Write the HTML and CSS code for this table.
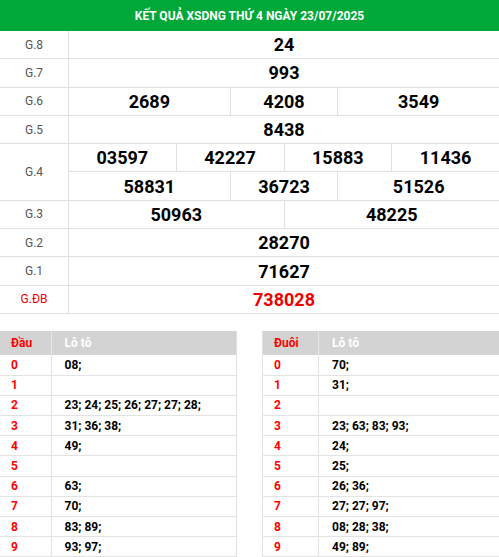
FILE: index.html
```html
<!DOCTYPE html>
<html lang="vi">
<head>
<meta charset="utf-8">
<title>KQXS</title>
<link rel="stylesheet" href="styles.css">
</head>
<body>
<div class="page">
  <div class="title">KẾT QUẢ XSDNG THỨ 4 NGÀY 23/07/2025</div>
  <div class="prizes">
    <div class="lbl">G.8</div><div class="num s8">24</div>
    <div class="lbl">G.7</div><div class="num s8">993</div>
    <div class="lbl">G.6</div><div class="num s3">2689</div><div class="num s2">4208</div><div class="num s3">3549</div>
    <div class="lbl">G.5</div><div class="num s8">8438</div>
    <div class="lbl two">G.4</div><div class="num s2">03597</div><div class="num s2">42227</div><div class="num s2">15883</div><div class="num s2">11436</div>
    <div class="num s3">58831</div><div class="num s2">36723</div><div class="num s3">51526</div>
    <div class="lbl">G.3</div><div class="num s4">50963</div><div class="num s4">48225</div>
    <div class="lbl">G.2</div><div class="num s8">28270</div>
    <div class="lbl">G.1</div><div class="num s8">71627</div>
    <div class="lbl red">G.ĐB</div><div class="num s8 special">738028</div>
  </div>

  <div class="lotto">
    <table class="lt lt-left">
      <thead><tr><th class="head">Đầu</th><th class="val">Lô tô</th></tr></thead>
      <tbody>
        <tr><td class="head">0</td><td class="val">08;</td></tr>
        <tr><td class="head">1</td><td class="val"></td></tr>
        <tr><td class="head">2</td><td class="val">23; 24; 25; 26; 27; 27; 28;</td></tr>
        <tr><td class="head">3</td><td class="val">31; 36; 38;</td></tr>
        <tr><td class="head">4</td><td class="val">49;</td></tr>
        <tr><td class="head">5</td><td class="val"></td></tr>
        <tr><td class="head">6</td><td class="val">63;</td></tr>
        <tr><td class="head">7</td><td class="val">70;</td></tr>
        <tr><td class="head">8</td><td class="val">83; 89;</td></tr>
        <tr><td class="head">9</td><td class="val">93; 97;</td></tr>
      </tbody>
    </table>
    <table class="lt lt-right">
      <thead><tr><th class="head">Đuôi</th><th class="val">Lô tô</th></tr></thead>
      <tbody>
        <tr><td class="head">0</td><td class="val">70;</td></tr>
        <tr><td class="head">1</td><td class="val">31;</td></tr>
        <tr><td class="head">2</td><td class="val"></td></tr>
        <tr><td class="head">3</td><td class="val">23; 63; 83; 93;</td></tr>
        <tr><td class="head">4</td><td class="val">24;</td></tr>
        <tr><td class="head">5</td><td class="val">25;</td></tr>
        <tr><td class="head">6</td><td class="val">26; 36;</td></tr>
        <tr><td class="head">7</td><td class="val">27; 27; 97;</td></tr>
        <tr><td class="head">8</td><td class="val">08; 28; 38;</td></tr>
        <tr><td class="head">9</td><td class="val">49; 89;</td></tr>
      </tbody>
    </table>
  </div>
</div>
</body>
</html>
```

FILE: styles.css
```css
* { box-sizing: border-box; }
html, body { margin: 0; padding: 0; background: #fff; }
body { font-family: Roboto, "Liberation Sans", sans-serif; overflow: hidden; }
.page { width: 499px; }

.title {
  height: 31px;
  background: #00a839;
  color: #fff;
  font-weight: 700;
  font-size: 12px;
  display: flex;
  align-items: center;
  justify-content: center;
}

.prizes {
  display: grid;
  grid-template-columns: 68px repeat(8, 1fr);
  grid-auto-rows: 27.3px;
  gap: 1px;
  background: #e0e0e0;
  padding-bottom: 1px;
}
.prizes > div {
  background: #fff;
  display: flex;
  align-items: center;
  justify-content: center;
}
.lbl { font-size: 12px; color: #555; }
.lbl.two { grid-row: span 2; }
.lbl.red { color: #e00; }
.num { font-size: 18px; font-weight: 700; color: #000; }
.num.special { color: #e00; }
.s2 { grid-column: span 2; }
.s3 { grid-column: span 3; }
.s4 { grid-column: span 4; }
.s8 { grid-column: span 8; }

.lotto {
  display: flex;
  justify-content: space-between;
  margin-top: 17px;
}
.lt {
  width: 237px;
  border-collapse: collapse;
  font-size: 12px;
  font-weight: 700;
  table-layout: fixed;
}
.lt-left { border-right: 1px solid #e0e0e0; }
.lt-right { border-left: 1px solid #e0e0e0; width: 237px; }
.lt th {
  background: #d3d3d3;
  height: 24px;
  text-align: left;
  font-weight: 700;
  padding: 0;
}
.lt th.head { color: #f00; padding-left: 11px; border-right: 1px solid #e8e8e8; }
.lt th.val { color: #fff; padding-left: 13px; }
.lt-left .head { width: 51px; }
.lt-right .head { width: 56px; }
.lt td {
  height: 20.2px;
  padding: 0;
  border-bottom: 1px solid #e3e3e3;
}
.lt td.head { color: #f00; padding-left: 11px; border-right: 1px solid #e3e3e3; }
.lt td.val { color: #000; padding-left: 13px; }
```
